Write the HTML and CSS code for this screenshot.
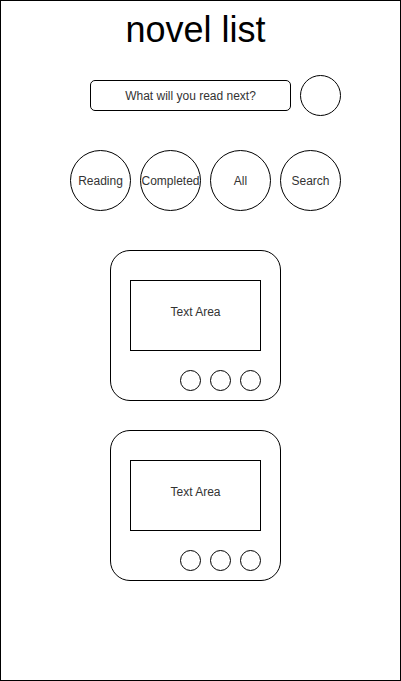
FILE: index.html
```html
<!DOCTYPE html>
<html lang="en">
<head>
<meta charset="UTF-8">
<meta name="viewport" content="width=device-width, initial-scale=1.0">
<title>novel list</title>
<link rel="stylesheet" href="styles.css">
</head>
<body>

<div class="frame">
  <h1 class="title">novel list</h1>

  <div class="search-row">
    <div class="search-box">What will you read next?</div>
    <div class="search-btn"></div>
  </div>

  <div class="filters">
    <div class="filter">Reading</div>
    <div class="filter">Completed</div>
    <div class="filter">All</div>
    <div class="filter">Search</div>
  </div>

  <div class="cards">
    <div class="card">
      <div class="text-area">Text Area</div>
      <div class="actions">
        <span class="dot"></span>
        <span class="dot"></span>
        <span class="dot"></span>
      </div>
    </div>
    <div class="card">
      <div class="text-area">Text Area</div>
      <div class="actions">
        <span class="dot"></span>
        <span class="dot"></span>
        <span class="dot"></span>
      </div>
    </div>
  </div>
</div>

</body>
</html>
```

FILE: styles.css
```css
* {
  box-sizing: border-box;
}
body {
  margin: 0;
  background-color: #fff;
  color: #000;
  font-family: "Liberation Sans", Arial, sans-serif;
}
.frame {
  width: 401px;
  height: 681px;
  border: 1px solid #000;
}
.title {
  margin: 0;
  padding: 9px 10px 0 0;
  font-size: 36px;
  font-weight: normal;
  line-height: 40px;
  text-align: center;
}
.search-row {
  display: flex;
  align-items: center;
  gap: 9px;
  margin-top: 25px;
  padding-left: 89px;
}
.search-box {
  width: 201px;
  height: 31px;
  border: 1px solid #000;
  border-radius: 5px;
  font-size: 12px;
  color: #333;
  display: flex;
  justify-content: center;
  align-items: center;
}
.search-btn {
  width: 41px;
  height: 41px;
  border: 1px solid #000;
  border-radius: 50%;
}
.filters {
  display: flex;
  gap: 9px;
  margin-top: 34px;
  padding-left: 69px;
}
.filter {
  width: 61px;
  height: 61px;
  border: 1px solid #000;
  border-radius: 50%;
  font-size: 12px;
  color: #333;
  display: flex;
  justify-content: center;
  align-items: center;
}
.cards {
  display: flex;
  flex-direction: column;
  gap: 29px;
  margin-top: 39px;
  padding-left: 109px;
}
.card {
  width: 171px;
  height: 151px;
  border: 1px solid #000;
  border-radius: 20px;
  padding: 29px 0 0 19px;
}
.text-area {
  width: 131px;
  height: 71px;
  border: 1px solid #000;
  font-size: 12px;
  color: #333;
  text-align: center;
  padding-top: 24px;
}
.actions {
  display: flex;
  gap: 9px;
  margin-top: 19px;
  padding-left: 50px;
}
.dot {
  width: 21px;
  height: 21px;
  border: 1px solid #000;
  border-radius: 50%;
}
```
